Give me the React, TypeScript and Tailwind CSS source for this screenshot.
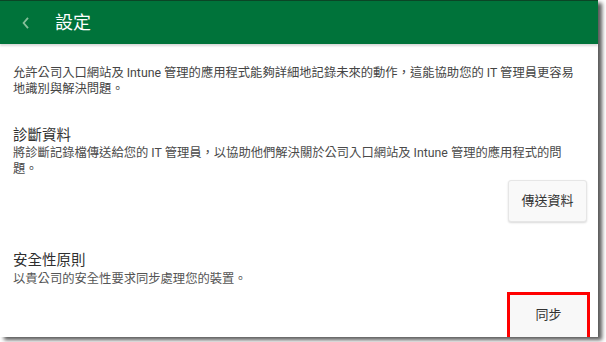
import React from "react";

const font = { fontFamily: 'Roboto, "Noto Sans CJK TC", "Noto Sans", sans-serif' };

const SettingsScreen: React.FC = () => {
  return (
    <div className="w-[606px] h-[342px] bg-white overflow-hidden" style={font}>
      <div className="w-[598px] h-[337px] bg-white flex flex-col overflow-hidden shadow-[4px_3px_4px_rgba(0,0,0,0.65)]">
        {/* title bar */}
        <header className="h-[44px] shrink-0 border-t border-[#0b4526] bg-[#00733a] flex items-center pl-[22px] shadow-[0_2px_2px_rgba(0,0,0,0.15)] relative z-10">
          <svg width="7" height="12" viewBox="0 0 7 12" className="shrink-0">
            <path d="M6 0.8 L1.6 6 L6 11.2" fill="none" stroke="#86bf9a" strokeWidth="1.8" />
          </svg>
          <span className="ml-[26px] text-[18px] leading-none text-white">設定</span>
        </header>

        <div className="flex flex-col pl-[13px]">
          <p className="mt-[21px] w-[568px] text-[12.3px] leading-[16px] text-[#444]">
            允許公司入口網站及 Intune 管理的應用程式能夠詳細地記錄未來的動作，這能協助您的 IT 管理員更容易地識別與解決問題。
          </p>

          {/* 診斷資料 */}
          <h2 className="mt-[31px] text-[14.5px] leading-[16px] text-[#2f2f2f]">診斷資料</h2>
          <p className="mt-[1px] w-[568px] text-[12.3px] leading-[16px] text-[#4a4a4a]">
            將診斷記錄檔傳送給您的 IT 管理員，以協助他們解決關於公司入口網站及 Intune 管理的應用程式的問題。
          </p>
          <div className="flex justify-end pr-[11px] mt-[3px]">
            <button className="w-[79px] h-[42px] rounded-[3px] bg-[#f9f9f9] border border-[#e6e6e6] shadow-[0_1px_2px_rgba(0,0,0,0.15)] text-[13px] text-[#333]">
              傳送資料
            </button>
          </div>

          {/* 安全性原則 */}
          <h2 className="mt-[31px] text-[14.5px] leading-[16px] text-[#2f2f2f]">安全性原則</h2>
          <p className="mt-[2px] text-[12.3px] leading-[16px] text-[#555]">
            以貴公司的安全性要求同步處理您的裝置。
          </p>
          <div className="flex justify-end pr-[8px] mt-[5px]">
            <div className="border-[3px] border-[#ff0000] w-[83px] h-[48px] flex">
              <button className="flex-1 bg-[#f8f8f8] text-[13px] text-[#333] pb-[3px]">同步</button>
            </div>
          </div>
        </div>
      </div>
    </div>
  );
};

export default function App() {
  return <SettingsScreen />;
}
